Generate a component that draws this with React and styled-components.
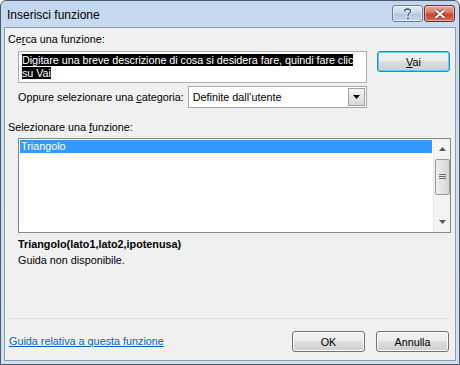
import React from "react";
import styled, { createGlobalStyle } from "styled-components";

const GlobalStyle = createGlobalStyle`
  html, body {
    margin: 0;
    padding: 0;
    background: #fff;
  }
  body {
    font-family: "Liberation Sans", Arial, sans-serif;
    font-size: 10.8px;
    color: #000;
  }
`;

const Window = styled.div`
  width: 460px;
  height: 365px;
  box-sizing: border-box;
  border: 1px solid #4b5868;
  border-radius: 6px 6px 0 0;
  background: linear-gradient(to bottom, #c1d5ee 0%, #cbdcf0 30px, #d1e0f2 100%);
  display: flex;
  flex-direction: column;
  padding: 0 3px 3px 3px;
`;

const TitleBar = styled.div`
  height: 26px;
  display: flex;
  align-items: center;
  justify-content: space-between;
  padding-left: 3px;
`;

const Title = styled.span`
  font-size: 12px;
  color: #000;
  padding-top: 1px;
`;

const Caption = styled.div`
  display: flex;
  gap: 1px;
  align-self: flex-start;
  margin-top: 4px;
  margin-right: 1px;
`;

const CaptionButton = styled.div`
  width: ${(p) => p.$w}px;
  height: 17px;
  box-sizing: border-box;
  border: 1px solid ${(p) => (p.$close ? "#7a2b25" : "#6b7d96")};
  border-radius: 3px;
  display: flex;
  align-items: center;
  justify-content: center;
  background: ${(p) =>
    p.$close
      ? "linear-gradient(to bottom, #e9a99c 0%, #d9785f 45%, #c4472e 55%, #d76a4f 100%)"
      : "linear-gradient(to bottom, #e3ecf6 0%, #c9d8ea 45%, #b3c7e0 55%, #c6d8ee 100%)"};
  box-shadow: inset 0 0 0 1px rgba(255, 255, 255, 0.45);
`;

const Client = styled.div`
  flex: 1;
  border: 1px solid #8a9db4;
  background: #f0f0f0;
  display: flex;
  flex-direction: column;
  padding: 4px 3px 0 3px;
`;

const Label = styled.div`
  line-height: 14px;
  color: #000;
  padding-left: ${(p) => p.$indent || 0}px;
  margin-top: ${(p) => p.$top || 0}px;
  font-weight: ${(p) => (p.$bold ? "bold" : "normal")};
`;

const Key = styled.span`
  text-decoration: underline;
`;

const SearchRow = styled.div`
  display: flex;
  align-items: flex-start;
  margin-top: 5px;
  padding-left: 10px;
  gap: 10px;
`;

const SearchBox = styled.div`
  width: 349px;
  height: 32px;
  box-sizing: border-box;
  background: #fff;
  border: 1px solid #abadb3;
  padding: 2px 3px;
  line-height: 12.5px;
  letter-spacing: -0.05px;
`;

const Selected = styled.span`
  background: #000;
  color: #fff;
  box-decoration-break: clone;
  -webkit-box-decoration-break: clone;
`;

const Button = styled.button`
  width: 73px;
  height: 21px;
  box-sizing: border-box;
  border: 1px solid ${(p) => (p.$default ? "#3c7fb1" : "#707070")};
  border-radius: 3px;
  font-family: "Liberation Sans", Arial, sans-serif;
  font-size: 10.8px;
  color: #000;
  padding: 0;
  background: linear-gradient(to bottom, #f2f2f2 0%, #ebebeb 49%, #dddddd 50%, #cfcfcf 100%);
  box-shadow: ${(p) =>
    p.$default ? "inset 0 0 0 1px #48d8fb" : "inset 0 0 0 1px #fcfcfc"};
`;

const CategoryRow = styled.div`
  display: flex;
  align-items: center;
  margin-top: 3px;
  padding-left: 10px;
  gap: 4px;
`;

const Select = styled.div`
  width: 179px;
  height: 22px;
  box-sizing: border-box;
  background: #fff;
  border: 1px solid #a7a7a7;
  display: flex;
  align-items: center;
  justify-content: space-between;
  padding: 0 1px 0 4px;
`;

const DropButton = styled.div`
  width: 17px;
  height: 18px;
  box-sizing: border-box;
  border: 1px solid #a0a0a0;
  background: linear-gradient(to bottom, #f4f4f4 0%, #e6e6e6 50%, #d6d6d6 100%);
  display: flex;
  align-items: center;
  justify-content: center;
`;

const ListBox = styled.div`
  margin: 4px 0 0 10px;
  width: 433px;
  height: 95px;
  box-sizing: border-box;
  background: #fff;
  border: 1px solid #828790;
  display: flex;
`;

const ListItems = styled.div`
  flex: 1;
  padding: 1px 1px 0 1px;
`;

const ListItem = styled.div`
  height: 13px;
  line-height: 13px;
  padding-left: 1px;
  background: ${(p) => (p.$active ? "#3399ff" : "transparent")};
  color: ${(p) => (p.$active ? "#fff" : "#000")};
`;

const ScrollBar = styled.div`
  width: 17px;
  background: #f3f3f3;
  border-left: 1px solid #e8e8e8;
  display: flex;
  flex-direction: column;
  align-items: center;
  padding: 3px 0;
  box-sizing: border-box;
`;

const ArrowSlot = styled.div`
  height: 14px;
  display: flex;
  align-items: center;
  justify-content: center;
`;

const Thumb = styled.div`
  margin-top: 3px;
  width: 15px;
  height: 36px;
  box-sizing: border-box;
  border: 1px solid #979797;
  border-radius: 2px;
  background: linear-gradient(to right, #eeeeee 0%, #e2e2e2 50%, #d4d4d4 100%);
  display: flex;
  align-items: center;
  justify-content: center;
`;

const Spacer = styled.div`
  flex: 1;
`;

const Info = styled.div`
  padding-left: 10px;
  margin-top: 4px;
  display: flex;
  flex-direction: column;
  gap: 2px;
`;

const Separator = styled.div`
  margin: 0 2px 0 1px;
  height: 1px;
  background: #d7dfe6;
`;

const Footer = styled.div`
  height: 41px;
  box-sizing: border-box;
  display: flex;
  align-items: flex-start;
  padding: 12px 3px 0 1px;
  gap: 11px;
`;

const Link = styled.a`
  color: #0066cc;
  text-decoration: underline;
  margin: 3px auto 0 0;
  line-height: 14px;
  cursor: pointer;
`;

const Arrow = ({ down, color = "#000" }) => (
  <svg width="7" height="4" viewBox="0 0 7 4">
    <path d={down ? "M0 0h7L3.5 4z" : "M0 4h7L3.5 0z"} fill={color} />
  </svg>
);

export default function App() {
  return (
    <>
      <GlobalStyle />
      <Window>
        <TitleBar>
          <Title>Inserisci funzione</Title>
          <Caption>
            <CaptionButton $w={31}>
              <svg width="9" height="12" viewBox="0 0 9 12">
                <path
                  d="M1.5 3.5C1.5 1.8 2.8 1 4.5 1S7.5 1.8 7.5 3.4c0 1.6-2.5 2-2.5 3.8v1"
                  fill="none"
                  stroke="#fff"
                  strokeWidth="2.6"
                />
                <path
                  d="M1.5 3.5C1.5 1.8 2.8 1 4.5 1S7.5 1.8 7.5 3.4c0 1.6-2.5 2-2.5 3.8v1"
                  fill="none"
                  stroke="#3a4a60"
                  strokeWidth="1.3"
                />
                <rect x="3.6" y="9.3" width="2.6" height="2.4" fill="#3a4a60" stroke="#fff" strokeWidth="0.6" />
              </svg>
            </CaptionButton>
            <CaptionButton $w={31} $close>
              <svg width="12" height="10" viewBox="0 0 12 10">
                <path d="M1.5 1.2l9 7.6M10.5 1.2l-9 7.6" stroke="#5a1a14" strokeWidth="3.6" />
                <path d="M1.5 1.2l9 7.6M10.5 1.2l-9 7.6" stroke="#fff" strokeWidth="2.2" />
              </svg>
            </CaptionButton>
          </Caption>
        </TitleBar>
        <Client>
          <Label>
            Ce<Key>r</Key>ca una funzione:
          </Label>
          <SearchRow>
            <SearchBox>
              <Selected>
                Digitare una breve descrizione di cosa si desidera fare, quindi fare clic su Vai
              </Selected>
            </SearchBox>
            <Button $default>
              <Key>V</Key>ai
            </Button>
          </SearchRow>
          <CategoryRow>
            <span>
              Oppure selezionare una <Key>c</Key>ategoria:
            </span>
            <Select>
              <span>Definite dall’utente</span>
              <DropButton>
                <Arrow down />
              </DropButton>
            </Select>
          </CategoryRow>
          <Label $top={12}>
            Selezionare una <Key>f</Key>unzione:
          </Label>
          <ListBox>
            <ListItems>
              <ListItem $active>Triangolo</ListItem>
            </ListItems>
            <ScrollBar>
              <ArrowSlot>
                <Arrow color="#5a5a5a" />
              </ArrowSlot>
              <Thumb>
                <svg width="7" height="6" viewBox="0 0 7 6">
                  <path d="M0 0.5h7M0 2.5h7M0 4.5h7" stroke="#6e6e6e" strokeWidth="1" />
                </svg>
              </Thumb>
              <Spacer />
              <ArrowSlot>
                <Arrow down color="#5a5a5a" />
              </ArrowSlot>
            </ScrollBar>
          </ListBox>
          <Info>
            <Label $bold>Triangolo(lato1,lato2,ipotenusa)</Label>
            <Label>Guida non disponibile.</Label>
          </Info>
          <Spacer />
          <Separator />
          <Footer>
            <Link>Guida relativa a questa funzione</Link>
            <Button>OK</Button>
            <Button>Annulla</Button>
          </Footer>
        </Client>
      </Window>
    </>
  );
}
